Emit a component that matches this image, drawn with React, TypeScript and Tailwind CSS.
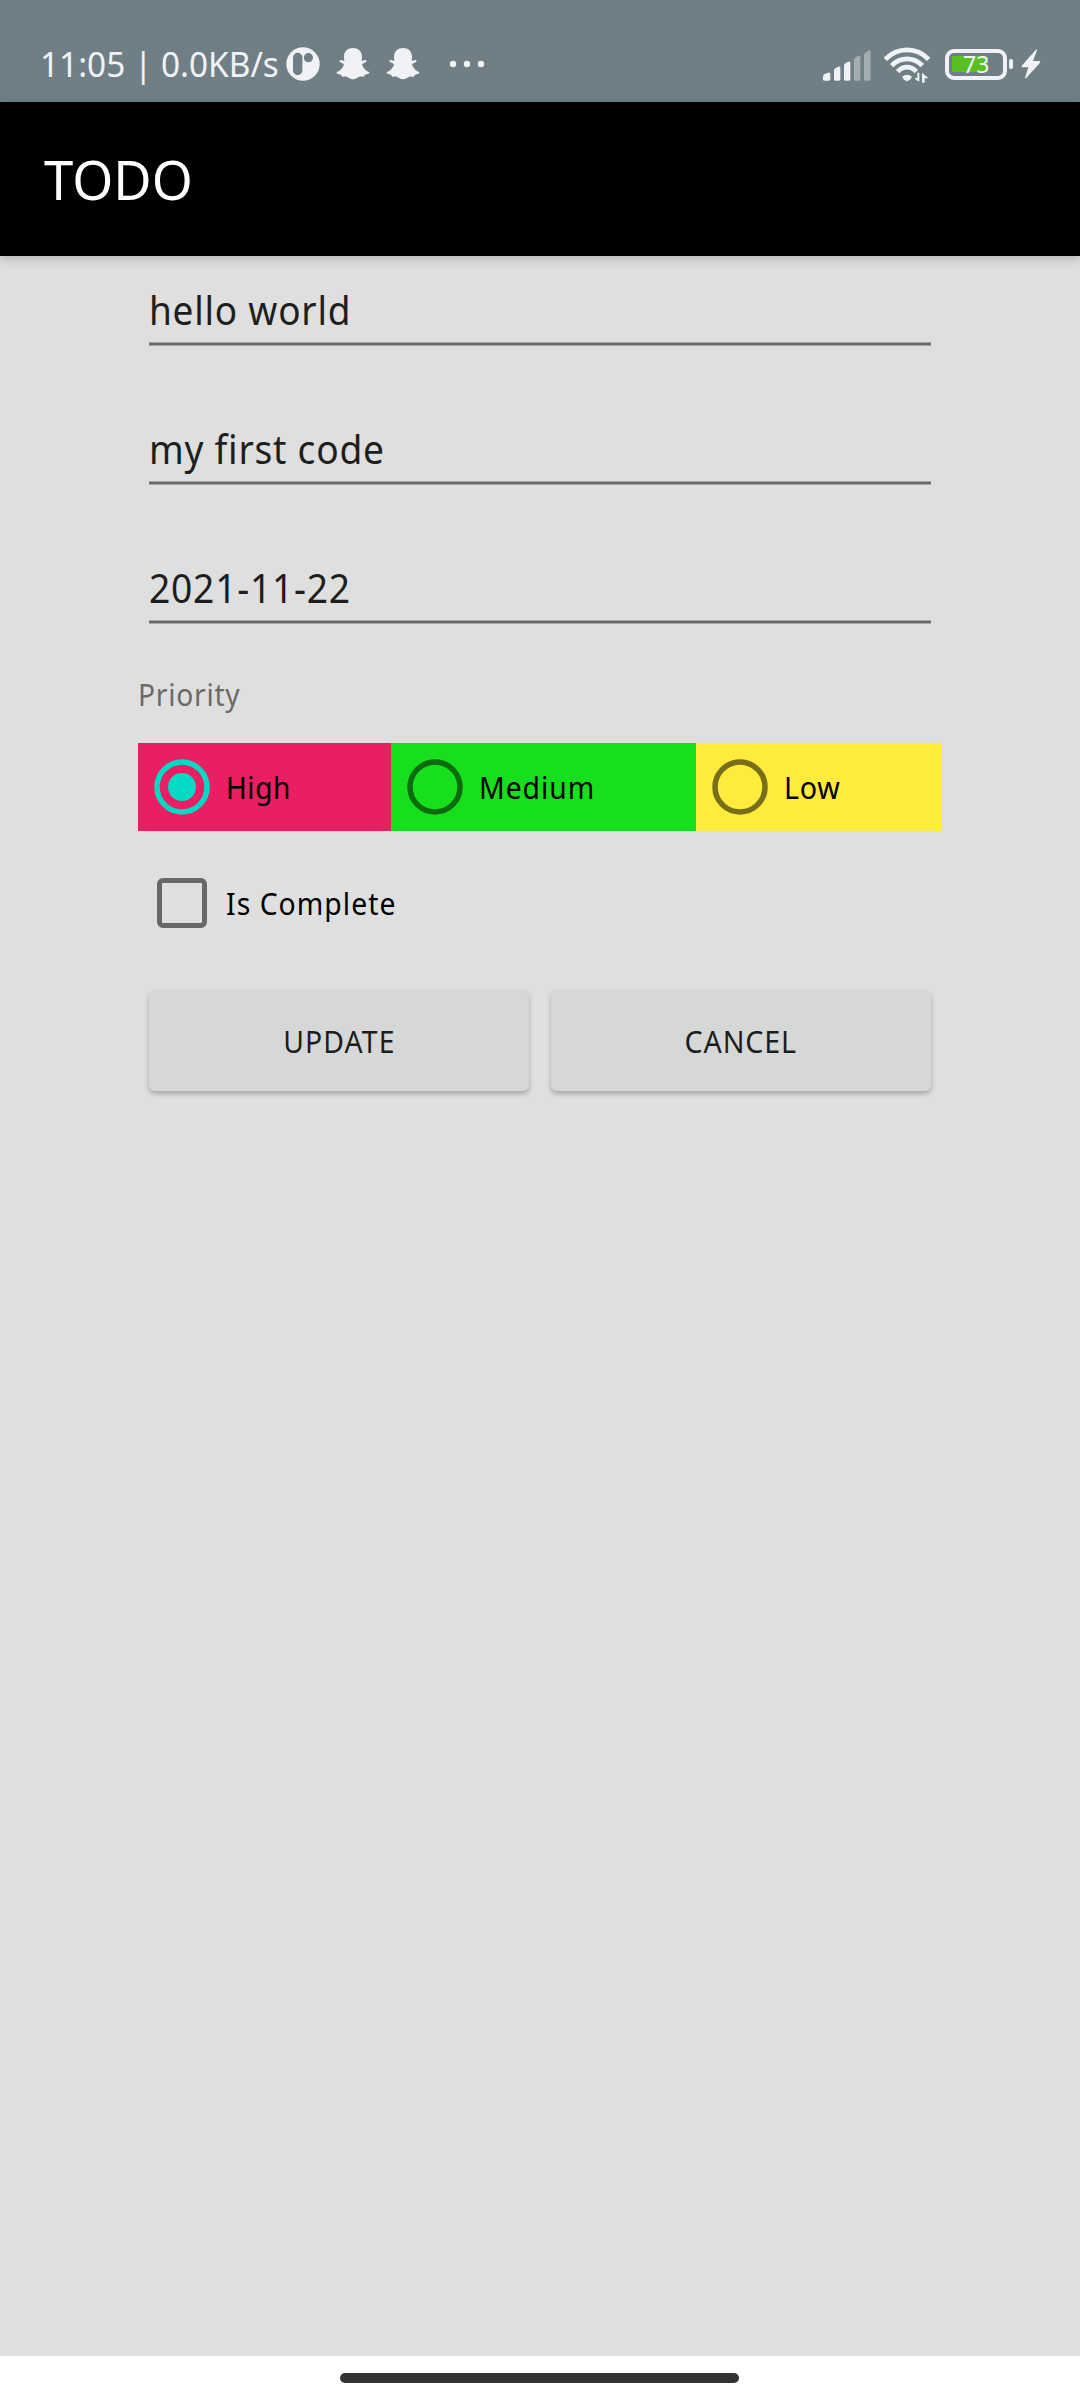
import React from "react";

const Ghost = () => (
  <svg width="34" height="34" viewBox="0 0 102 102" fill="#f0f2f5" className="shrink-0">
    <path d="M51 3C66 3 78 13 78 29L77 41C80 42 84 40 88 39C92 38 93 42 90 45L80 50C77 53 79 56 82 61C86 68 92 73 99 75C102 77 99 80 95 81L87 83C85 84 86 88 83 89C79 90 75 88 70 89C64 91 60 97 51 97C42 97 38 91 32 89C27 88 23 90 19 89C16 88 17 84 15 83L7 81C3 80 0 77 3 75C10 73 16 68 20 61C23 56 25 53 22 50L12 45C9 42 10 38 14 39C18 40 22 42 25 41L24 29C24 13 36 3 51 3Z" />
  </svg>
);

const StatusBar = () => (
  <header className="flex h-[102px] items-center bg-[#707f85] pt-[26px] pl-10 text-[#f0f2f5]">
    <div className="w-[246px] shrink-0">
      <span className="inline-block origin-left scale-x-[0.953] text-[35px] leading-[50px] whitespace-pre">11:05 | 0.0KB/s</span>
    </div>
    <svg width="34" height="34" viewBox="0 0 34 34" className="shrink-0">
      <circle cx="17" cy="17" r="16.7" fill="#f0f2f5" />
      <path d="M7 10.5a4.7 4.7 0 0 1 9.4 0v13a4.7 4.7 0 0 1-9.4 0z" fill="#707f85" />
      <circle cx="22.4" cy="10.7" r="4.6" fill="#707f85" />
    </svg>
    <div className="ml-4 flex gap-4">
      <Ghost />
      <Ghost />
    </div>
    <svg width="36" height="8" viewBox="0 0 36 8" fill="#f0f2f5" className="ml-[29px] shrink-0">
      <circle cx="4" cy="4" r="3.2" />
      <circle cx="18" cy="4" r="3.2" />
      <circle cx="32" cy="4" r="3.2" />
    </svg>
    <div className="mr-[39px] ml-auto flex items-center">
      <svg width="50" height="34" viewBox="0 0 150 102" fill="#f0f2f5">
        <path d="M3 89Q3 84 7 82L18 77Q25 75 25 81V97Q25 101 21 101H7Q3 101 3 97Z" />
        <path d="M36 71Q36 66 40 64L47 60Q55 56 55 62V97Q55 101 51 101H40Q36 101 36 97Z" />
        <path d="M66 56Q66 51 70 49L77 45Q85 41 85 47V97Q85 101 81 101H70Q66 101 66 97Z" />
        <g fill="#a4adb2">
          <path d="M96 39Q96 34 100 32L107 27Q115 23 115 29V97Q115 101 111 101H100Q96 101 96 97Z" />
          <path d="M126 25Q126 20 130 17L138 11Q146 7 146 13V97Q146 101 142 101H130Q126 101 126 97Z" />
        </g>
      </svg>
      <svg width="48" height="38" viewBox="0 0 144 114" className="ml-[11px]">
        <g fill="none" stroke="#f0f2f5" strokeWidth="14">
          <path d="M7 43C43 5 101 5 137 43" />
          <path d="M26 62C52 35 92 35 118 62" />
          <path d="M44 80C60 62 84 62 100 80" />
        </g>
        <path d="M57 95Q72 83 87 95L82 103Q72 114 62 103Z" fill="#f0f2f5" />
        <path d="M103 83H109V109H105L96 101V99H103ZM117 83L135 98V100H125V113H117Z" fill="#f0f2f5" />
      </svg>
      <div className="relative ml-[14px] flex h-[31px] w-[62px] items-center rounded-[9px] border-4 border-[#f0f2f5] pl-[3px]">
        <div className="h-4 w-9 rounded-[2px] bg-[#5abf22]" />
        <span className="absolute top-[-1px] left-[14px] origin-left scale-x-[0.96] text-[24px] leading-[24px]">73</span>
      </div>
      <div className="ml-0.5 h-[10px] w-1 rounded-[2px] bg-[#f0f2f5]" />
      <svg width="20" height="30" viewBox="0 0 60 90" fill="#f0f2f5" className="ml-2">
        <path d="M46 1L1 52Q1 55 4 55H22L12 86Q12 90 16 87L57 41Q59 37 54 36H36L48 4Q49 0 46 1Z" />
      </svg>
    </div>
  </header>
);

const Field = ({ value, scale }: { value: string; scale: string }) => (
  <div className="h-[139px] pt-[26px]">
    <div className="h-[60px]">
      <span className={`inline-block origin-left leading-[56px] whitespace-pre text-[#1d1e1e] ${scale}`}>{value}</span>
    </div>
    <div className="mx-0 h-1 border-y border-[#a6a6a6] bg-[#686868]" />
  </div>
);

const Radio = ({ label, checked, box, ring, scale }: { label: string; checked?: boolean; box: string; ring: string; scale: string }) => (
  <label className={`flex h-[88px] items-center pl-4 ${box}`}>
    <svg width="56" height="56" viewBox="0 0 56 56">
      <circle cx="28" cy="28" r="25" fill="none" stroke={ring} strokeWidth="5.5" />
      {checked && <circle cx="28" cy="28" r="14" fill={ring} />}
    </svg>
    <span className={`ml-4 origin-left text-[30.5px] leading-[44px] text-black ${scale}`}>{label}</span>
  </label>
);

const Button = ({ label, scale }: { label: string; scale: string }) => (
  <button className="flex h-[101px] w-[380px] items-center justify-center rounded-md bg-[#d6d8d7] shadow-[0_3px_5px_rgba(0,0,0,0.25)]">
    <span className={`text-[30.5px] leading-[44px] text-[#1c1d1d] ${scale}`}>{label}</span>
  </button>
);

export default function App() {
  return (
    <div className="flex h-[2400px] w-[1080px] flex-col overflow-hidden bg-[#dfdfdf] font-['Noto_Sans',sans-serif]">
      <StatusBar />
      <div className="flex h-[154px] items-center bg-black pl-11 text-white shadow-[0_3px_10px_rgba(0,0,0,0.2)]">
        <h1 className="origin-left scale-x-[0.957] text-[55px] leading-[76px]">TODO</h1>
      </div>
      <main className="flex-1 px-[138px]">
        <div className="mx-[11px]">
          <Field value="hello world" scale="text-[39.5px] tracking-[0.8px] scale-x-[0.937]" />
          <Field value="my first code" scale="text-[39.5px] tracking-[0.8px] scale-x-[0.94]" />
          <Field value="2021-11-22" scale="text-[40.5px] tracking-[0.8px] scale-x-[0.92]" />
        </div>
        <p className="-mt-px h-[71px] origin-left scale-x-[0.925] text-[30.5px] leading-[44px] tracking-[0.8px] text-[#6a6a6a]">Priority</p>
        <div className="flex">
          <Radio label="High" checked box="w-[253px] bg-[#e91e63]" ring="#03dac5" scale="tracking-[0.6px] scale-x-[0.92]" />
          <Radio label="Medium" box="w-[305px] bg-[#17df1e]" ring="#0a6d0d" scale="tracking-[1px] scale-x-[0.93]" />
          <Radio label="Low" box="w-[246px] bg-[#ffeb3b]" ring="#776e19" scale="tracking-[0.8px] scale-x-[0.94]" />
        </div>
        <label className="mt-[47px] flex h-[50px] items-center pl-[19px]">
          <span className="size-[50px] rounded-md border-[5.5px] border-[#686868]" />
          <span className="ml-[19px] origin-left scale-x-[0.93] text-[30.5px] leading-[44px] tracking-[1.1px] text-black">Is Complete</span>
        </label>
        <div className="mx-[11px] mt-[62px] flex justify-between">
          <Button label="UPDATE" scale="tracking-[1.2px] scale-x-[0.93]" />
          <Button label="CANCEL" scale="tracking-[0.9px] scale-x-[0.94]" />
        </div>
      </main>
      <footer className="flex h-11 bg-white pt-[17px] pl-[340px]">
        <div className="h-[10px] w-[399px] rounded-full bg-[#333333]" />
      </footer>
    </div>
  );
}
